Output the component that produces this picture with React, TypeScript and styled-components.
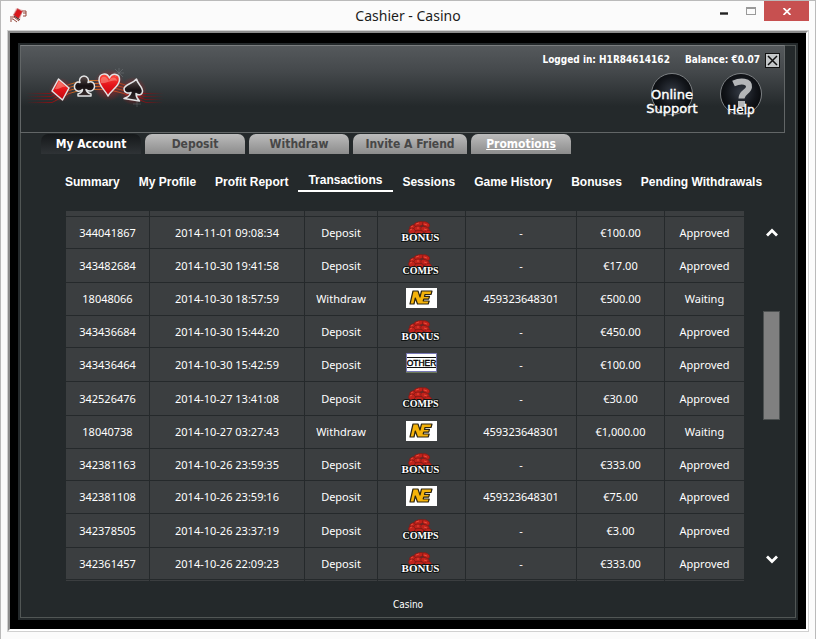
import React from 'react';
import styled, { createGlobalStyle, css } from 'styled-components';

const ink = '#24292b';
const cell = '#3b3e40';
const line = '#626667';
const uiFont = "'Noto Sans', 'Open Sans', sans-serif";
const wideFont = "'DejaVu Sans', sans-serif";
const narrowFont = "'DejaVu Sans Condensed', 'DejaVu Sans', sans-serif";

const GlobalStyle = createGlobalStyle`
  * { box-sizing: border-box; }
  body { margin: 0; background: #fbfbfb; }
  button { padding: 0; border: 0; background: none; color: inherit; font: inherit; cursor: pointer; }
  a { color: inherit; text-decoration: none; }
`;

const Window = styled.div`
  display: flex;
  flex-direction: column;
  min-height: 100vh;
  padding: 0 6px 7px;
  border: 1px solid #bababa;
  background: #fbfbfb;
  font-family: ${uiFont};
`;

const TitleBar = styled.header`
  display: grid;
  grid-template-columns: 1fr auto 1fr;
  height: 29px;
`;

const AppIcon = styled.svg`
  width: 18px;
  height: 16px;
  margin: 6px 0 0 2px;
`;

const Title = styled.h1`
  margin: 0;
  font-size: 14px;
  font-weight: 400;
  line-height: 30px;
  color: #1c1c1c;
`;

const WindowControls = styled.div`
  display: flex;
  justify-content: flex-end;
  align-items: flex-start;
`;

const WindowButton = styled.button<{ $close?: boolean }>`
  display: grid;
  place-items: center;
  width: ${(p) => (p.$close ? 45 : 27)}px;
  height: 20px;
  background: ${(p) => (p.$close ? '#c75050' : 'transparent')};
`;

const Client = styled.main`
  display: flex;
  flex: 1;
  padding: 10px 8px 9px;
  background: #000;
  border: 2px solid;
  border-color: #8c8c8c #fff #fff #8c8c8c;
  outline: 1px solid #d0d0d0;
  margin: 1px 1px 1px;
`;

const Shell = styled.div`
  display: flex;
  flex: 1;
  min-width: 0;
  padding: 2px;
  background: ${ink};
`;

const Panel = styled.div`
  display: flex;
  flex: 1;
  flex-direction: column;
  min-width: 0;
  border: 1px solid #515655;
`;

const Banner = styled.section`
  display: flex;
  justify-content: space-between;
  height: 88px;
  margin: -1px 10px 0 -1px;
  padding: 6px 4px 0 5px;
  border: 1px solid ${line};
  border-top-color: #7b7e80;
  background: linear-gradient(#55595c 0, #44484b 30%, #24292b 70%);
`;

const Logo = styled.svg`
  width: 140px;
  height: 42px;
  margin-top: 15px;
`;

const AccountArea = styled.div`
  display: flex;
  flex-direction: column;
  align-items: flex-end;
  gap: 5px;
`;

const AccountLine = styled.div`
  display: flex;
  align-items: center;
  gap: 15px;
  height: 16px;
  color: #fff;
  font: bold 10px/16px ${narrowFont};
`;

const BalanceGroup = styled.div`
  display: flex;
  align-items: center;
  gap: 5px;
`;

const BoxClose = styled.button`
  display: grid;
  place-items: center;
  width: 15px;
  height: 15px;
  border: 1px solid #111;
  background: #c4c7c9;
`;

const Orbs = styled.div`
  display: flex;
  gap: 27px;
  padding-right: 18px;
`;

const Orb = styled.button`
  position: relative;
  display: flex;
  align-items: flex-end;
  justify-content: center;
  width: 42px;
  height: 42px;
  border: 1px solid #7b7f82;
  border-radius: 50%;
  background: radial-gradient(circle at 50% 45%, #343a44 0, #12151a 50%, #030405 85%);
  color: #fff;
`;

const OrbText = styled.span`
  position: relative;
  flex: none;
  font: 13px/14px ${wideFont};
  white-space: nowrap;
  text-align: center;
  -webkit-text-stroke: 0.4px #fff;
  margin-bottom: -2px;
`;

const HelpText = styled(OrbText)`
  font-size: 12px;
  margin-bottom: -3px;
`;

const OrbMark = styled.svg`
  position: absolute;
  inset: 0;
  width: 40px;
  height: 40px;
`;

const Tabs = styled.nav`
  display: flex;
  gap: 4px;
  padding: 1px 20px 0;
`;

const Tab = styled.button<{ $wide?: boolean; $active?: boolean; $link?: boolean }>`
  width: ${(p) => (p.$wide ? 114 : 100)}px;
  height: 20px;
  border-radius: 7px 7px 0 0;
  color: #474747;
  background: linear-gradient(#bcbcbc, #8c8c8c);
  font: bold 12px/20px ${narrowFont};
  ${(p) => p.$active && css`color: #fff; background: linear-gradient(#15181a, #2f3336);`}
  ${(p) => p.$link && css`color: #fff; text-decoration: underline;`}
`;

const SubNav = styled.nav`
  display: flex;
  align-items: flex-end;
  height: 38px;
  padding-left: 35px;
`;

const SubLink = styled.a<{ $active?: boolean }>`
  padding: 0 10px 3px 9px;
  color: #fff;
  font: bold 12px/14px 'Liberation Sans', sans-serif;
  white-space: nowrap;
  ${(p) => p.$active && css`padding: 0 11px 3px 10px; border-bottom: 2px solid #fff;`}
`;

const Body = styled.section`
  display: flex;
  gap: 19px;
  padding: 19px 15px 0 45px;
`;

const Table = styled.table`
  flex: 1;
  width: 100%;
  table-layout: fixed;
  border-collapse: separate;
  border-spacing: 0;
  color: #fff;
  font: 11px/14px ${uiFont};
  text-align: center;
`;

const Col = styled.col<{ $w: number }>`
  width: ${(p) => p.$w}px;
`;

const Row = styled.tr<{ $h: number }>`
  height: ${(p) => p.$h}px;
`;

const Cell = styled.td`
  padding: 0;
  background: ${cell};
  border-bottom: 1px solid #25292b;
  vertical-align: middle;
  &:not(:last-child) { border-right: 1px solid #25292b; }
`;

const EdgeCell = styled(Cell)`
  tbody:last-child & { border-bottom: 0; }
`;

const Badge = styled.svg`
  display: block;
  margin: 0 auto;
`;

const Scroller = styled.div`
  display: flex;
  flex: none;
  flex-direction: column;
  width: 17px;
  padding: 14px 0 15px;
`;

const Arrow = styled.button`
  display: grid;
  place-items: center;
  height: 14px;
`;

const Track = styled.div`
  flex: 1;
  padding-top: 72px;
`;

const Thumb = styled.div`
  height: 109px;
  border: 1px solid #4d5151;
  background: #808080;
`;

const Footer = styled.footer`
  padding: 17px 0 5px;
  color: #fff;
  font: 10px/14px ${narrowFont};
  text-align: center;
`;

type Method = 'BONUS' | 'COMPS' | 'NE' | 'OTHER';

const rowHeight: Record<Method, number> = { BONUS: 32, COMPS: 34, NE: 33, OTHER: 34 };

const rows: [string, string, string, Method, string, string, string][] = [
  ['344041867', '2014-11-01 09:08:34', 'Deposit', 'BONUS', '-', '€100.00', 'Approved'],
  ['343482684', '2014-10-30 19:41:58', 'Deposit', 'COMPS', '-', '€17.00', 'Approved'],
  ['18048066', '2014-10-30 18:57:59', 'Withdraw', 'NE', '459323648301', '€500.00', 'Waiting'],
  ['343436684', '2014-10-30 15:44:20', 'Deposit', 'BONUS', '-', '€450.00', 'Approved'],
  ['343436464', '2014-10-30 15:42:59', 'Deposit', 'OTHER', '-', '€100.00', 'Approved'],
  ['342526476', '2014-10-27 13:41:08', 'Deposit', 'COMPS', '-', '€30.00', 'Approved'],
  ['18040738', '2014-10-27 03:27:43', 'Withdraw', 'NE', '459323648301', '€1,000.00', 'Waiting'],
  ['342381163', '2014-10-26 23:59:35', 'Deposit', 'BONUS', '-', '€333.00', 'Approved'],
  ['342381108', '2014-10-26 23:59:16', 'Deposit', 'NE', '459323648301', '€75.00', 'Approved'],
  ['342378505', '2014-10-26 23:37:19', 'Deposit', 'COMPS', '-', '€3.00', 'Approved'],
  ['342361457', '2014-10-26 22:09:23', 'Deposit', 'BONUS', '-', '€333.00', 'Approved'],
];

const columns = [84, 155, 73, 88, 111, 88, 79];
const subLinks = ['Summary', 'My Profile', 'Profit Report', 'Transactions', 'Sessions', 'Game History', 'Bonuses', 'Pending Withdrawals'];

function MethodBadge({ kind }: { kind: Method }) {
  if (kind === 'NE') {
    return (
      <Badge width="31" height="22" role="img" aria-label="NE">
        <path d="M0 0h31v20H0z" fill="#fff" />
        <g stroke="#2c2410" strokeWidth="1.2" fill="#f5b30a" strokeLinejoin="round">
          <path d="M4 16 7 3h5l2 6 1.500-6h10.500l-1 3.500h-6l-.5 1.800h5l-.8 2.800h-5l-.5 1.900h6l-1 3H11.500l-2.200-6L8 16z" />
        </g>
      </Badge>
    );
  }
  if (kind === 'OTHER') {
    return (
      <Badge width="31" height="23" role="img" aria-label="Other">
        <path d="M.5.500h30v18H.5z" fill="#fff" stroke="#7777b5" />
        <path d="M1 4.500h29M1 14.500h29" stroke="#111" />
        <path d="M0 19.500h31" stroke="#6c7a58" />
        <text x="15.500" y="12.500" textAnchor="middle" fontFamily="Liberation Sans, sans-serif" fontSize="8.500" fill="#000" stroke="#000" strokeWidth=".4">OTHER</text>
      </Badge>
    );
  }
  return (
    <Badge width="41" height="24" role="img" aria-label={kind}>
      <g fill="#c0221b" stroke="#7a1a15" strokeWidth=".6">
        <ellipse cx="12" cy="6" rx="3.500" ry="2.200" transform="rotate(-20 12 6)" />
        <ellipse cx="18" cy="3" rx="5" ry="2.200" transform="rotate(-12 18 3)" />
        <ellipse cx="25" cy="3.500" rx="4" ry="2.400" transform="rotate(25 25 3.500)" />
        <ellipse cx="11" cy="10" rx="3.500" ry="3" />
        <ellipse cx="17" cy="7.500" rx="4" ry="2.600" />
        <ellipse cx="24" cy="8.500" rx="4.500" ry="2.800" transform="rotate(20 24 8.500)" />
        <ellipse cx="27" cy="12" rx="3.500" ry="2.500" />
        <ellipse cx="18" cy="12" rx="4.500" ry="2.500" />
      </g>
      <path d="m15 3 3-1m5 1 3 1M9 9l2-1m5-1 2 0m5 1 3 1M10 6l2-1" stroke="#ea4a3a" />
      <text x="19.500" y="20" textAnchor="middle" fontFamily="Liberation Serif, serif" fontWeight="bold" fontSize={kind === 'BONUS' ? 11 : 10} fill="#fff" stroke="#101311" strokeWidth="2" paintOrder="stroke">{kind}</text>
    </Badge>
  );
}

function SuitsLogo() {
  return (
    <Logo viewBox="26 68 140 42" role="img" aria-label="Casino suits">
      <defs>
        <linearGradient id="fade" gradientUnits="userSpaceOnUse" x1="26" x2="164" y1="0" y2="0">
          <stop offset="0" stopColor="#7d0d10" stopOpacity="0" />
          <stop offset=".2" stopColor="#8e1114" />
          <stop offset=".35" stopColor="#c46a24" />
          <stop offset=".6" stopColor="#c4772b" />
          <stop offset=".82" stopColor="#8e1114" />
          <stop offset="1" stopColor="#7d0d10" stopOpacity="0" />
        </linearGradient>
        <linearGradient id="red" x2="0" y2="1">
          <stop offset="0" stopColor="#ff4a3f" />
          <stop offset=".5" stopColor="#e5151a" />
          <stop offset="1" stopColor="#c00810" />
        </linearGradient>
        <linearGradient id="dark" x2="0" y2="1">
          <stop offset="0" stopColor="#5b4e4c" />
          <stop offset=".5" stopColor="#171113" />
          <stop offset="1" stopColor="#3a2e2e" />
        </linearGradient>
        <radialGradient id="glow">
          <stop offset="0" stopColor="#e0181c" stopOpacity=".7" />
          <stop offset="1" stopColor="#e0181c" stopOpacity="0" />
        </radialGradient>
      </defs>
      <g fill="none" stroke="url(#fade)">
        <path d="M26 94.500h24l19-9 14-4h25l16 4 19 9h21" />
        <path d="M27 97.500h24l18-9 14-4h25l16 4 20 9h20" />
        <path d="M26 100.500h26l17-9 14-4h25l16 4 21 9h19" />
        <path d="M28 103.500h24l17-9 14-4h25l16 4 22 9h16" />
      </g>
      <circle cx="61" cy="91" r="12" fill="url(#glow)" />
      <circle cx="109" cy="86" r="16" fill="url(#glow)" />
      <circle cx="133" cy="92" r="14" fill="url(#glow)" />
      <g strokeLinejoin="round" strokeWidth="1.500" stroke="#e2e4e5">
        <path d="M58.500 80 69 89l-6.500 12L52 92z" fill="url(#red)" />
        <path d="M80 83.500a4.500 4.500 0 1 1 8 0c4-2 7 1 6.500 4.500-.5 4-5 5.500-8.500 2.500.5 2.500 2 3.500 5 4.500v2H78v-2c3-1 4.500-2 4.500-4.500-3 3-7.500 1.500-8-2-.5-4 2.500-6.500 5.500-5z" fill="url(#dark)" />
        <path d="M108 97c-3-6-9-10-9-16 0-7 8-8 10.500-2 3-6 10.500-4 10 2 0 6-8 10-11.500 16z" fill="url(#red)" />
        <path d="M136.500 80c1 5 6.500 8 6 12.500-.5 4-4.500 4-6.500 2 0 3 1 5 3.500 7.500L124 99.500c3.500-1 6-3 7-6-3 1.500-7 0-7-3.500 0-4.500 8.500-5 12.500-10z" fill="url(#dark)" />
      </g>
      <g fill="#ffb0a0" opacity=".45">
        <path d="m55 90 4-8 7 6c-4-1-7 3-11 2z" />
        <path d="M101 84c-2-7 5-9 8-2 2-5 8-4 8 0-6-2-10 3-16 2z" />
      </g>
      <path d="M119 69v10m-5-5h10m-9-4 8 8m0-8-8 8M137 101v7m-4-3h8" stroke="#bfc6c9" strokeWidth=".5" opacity=".4" />
    </Logo>
  );
}

function EdgeRow({ height }: { height: number }) {
  return (
    <Row $h={height} aria-hidden="true">
      {columns.map((_, i) => <EdgeCell key={i} />)}
    </Row>
  );
}

export default function App() {
  return (
    <>
      <GlobalStyle />
      <Window>
        <TitleBar>
          <AppIcon viewBox="0 0 18 16" aria-hidden="true">
            <path d="M1 10h4l5 4M1 12h3l4 3M1 14h2M13 4h4v2h-3m3 0v3h-3" fill="none" stroke="#934236" />
            <path d="m7 1 7 2-3 10-8-3z" fill="#ef6b6a" opacity=".35" />
            <path d="m8.500 1.500 5 3-4 7.500-5-4z" fill="#d9161b" stroke="#b98080" strokeWidth=".6" />
            <path d="m5 9 6 4" stroke="#333" />
          </AppIcon>
          <Title>Cashier - Casino</Title>
          <WindowControls>
            <WindowButton aria-label="Minimize">
              <svg width="8" height="8"><path d="M0 6.500h8" stroke="#222" strokeWidth="2.400" /></svg>
            </WindowButton>
            <WindowButton aria-label="Maximize">
              <svg width="10" height="8"><path d="M0 0h10v8H0zM1 2v5h8V2z" fill="#999" fillRule="evenodd" /></svg>
            </WindowButton>
            <WindowButton $close aria-label="Close window">
              <svg width="8" height="7"><path d="m.5 0 7 7m0-7-7 7" stroke="#fff" strokeWidth="1.700" /></svg>
            </WindowButton>
          </WindowControls>
        </TitleBar>
        <Client>
          <Shell>
            <Panel>
              <Banner>
                <SuitsLogo />
                <AccountArea>
                  <AccountLine>
                    <span>Logged in: H1R84614162</span>
                    <BalanceGroup>
                      <span>Balance: €0.07</span>
                      <BoxClose aria-label="Close cashier">
                        <svg width="11" height="11"><path d="m1 1 9 9m0-9-9 9" stroke="#111" strokeWidth="1.500" /></svg>
                      </BoxClose>
                    </BalanceGroup>
                  </AccountLine>
                  <Orbs>
                    <Orb><OrbText>Online<br />Support</OrbText></Orb>
                    <Orb>
                      <OrbMark viewBox="0 0 40 40" aria-hidden="true">
                        <path d="M12.500 9.500C20 6 28.500 7 28 13c-.5 5-7.500 5-7.500 11.500" fill="none" stroke="#b4b6b8" strokeWidth="6" />
                        <path d="M17 27h7v6h-7z" fill="#b4b6b8" />
                      </OrbMark>
                      <HelpText>Help</HelpText>
                    </Orb>
                  </Orbs>
                </AccountArea>
              </Banner>
              <Tabs aria-label="Cashier">
                <Tab $active>My Account</Tab>
                <Tab>Deposit</Tab>
                <Tab>Withdraw</Tab>
                <Tab $wide>Invite A Friend</Tab>
                <Tab $link>Promotions</Tab>
              </Tabs>
              <SubNav aria-label="My Account">
                {subLinks.map((label) => (
                  <SubLink key={label} href="#" $active={label === 'Transactions'}>{label}</SubLink>
                ))}
              </SubNav>
              <Body>
                <Table aria-label="Transactions">
                  <colgroup>{columns.map((w, i) => <Col key={i} $w={w} />)}</colgroup>
                  <tbody><EdgeRow height={6} /></tbody>
                  <tbody>
                    {rows.map((row) => (
                      <Row key={row[0]} $h={rowHeight[row[3]]}>
                        {row.map((value, i) => (
                          <Cell key={i}>{i === 3 ? <MethodBadge kind={row[3]} /> : value}</Cell>
                        ))}
                      </Row>
                    ))}
                  </tbody>
                  <tbody><EdgeRow height={1} /></tbody>
                </Table>
                <Scroller>
                  <Arrow aria-label="Scroll up">
                    <svg width="12" height="9"><path d="m1 7.500 5-5 5 5" fill="none" stroke="#fff" strokeWidth="2.800" /></svg>
                  </Arrow>
                  <Track><Thumb /></Track>
                  <Arrow aria-label="Scroll down">
                    <svg width="12" height="9"><path d="m1 1.500 5 5 5-5" fill="none" stroke="#fff" strokeWidth="2.800" /></svg>
                  </Arrow>
                </Scroller>
              </Body>
              <Footer>Casino</Footer>
            </Panel>
          </Shell>
        </Client>
      </Window>
    </>
  );
}
